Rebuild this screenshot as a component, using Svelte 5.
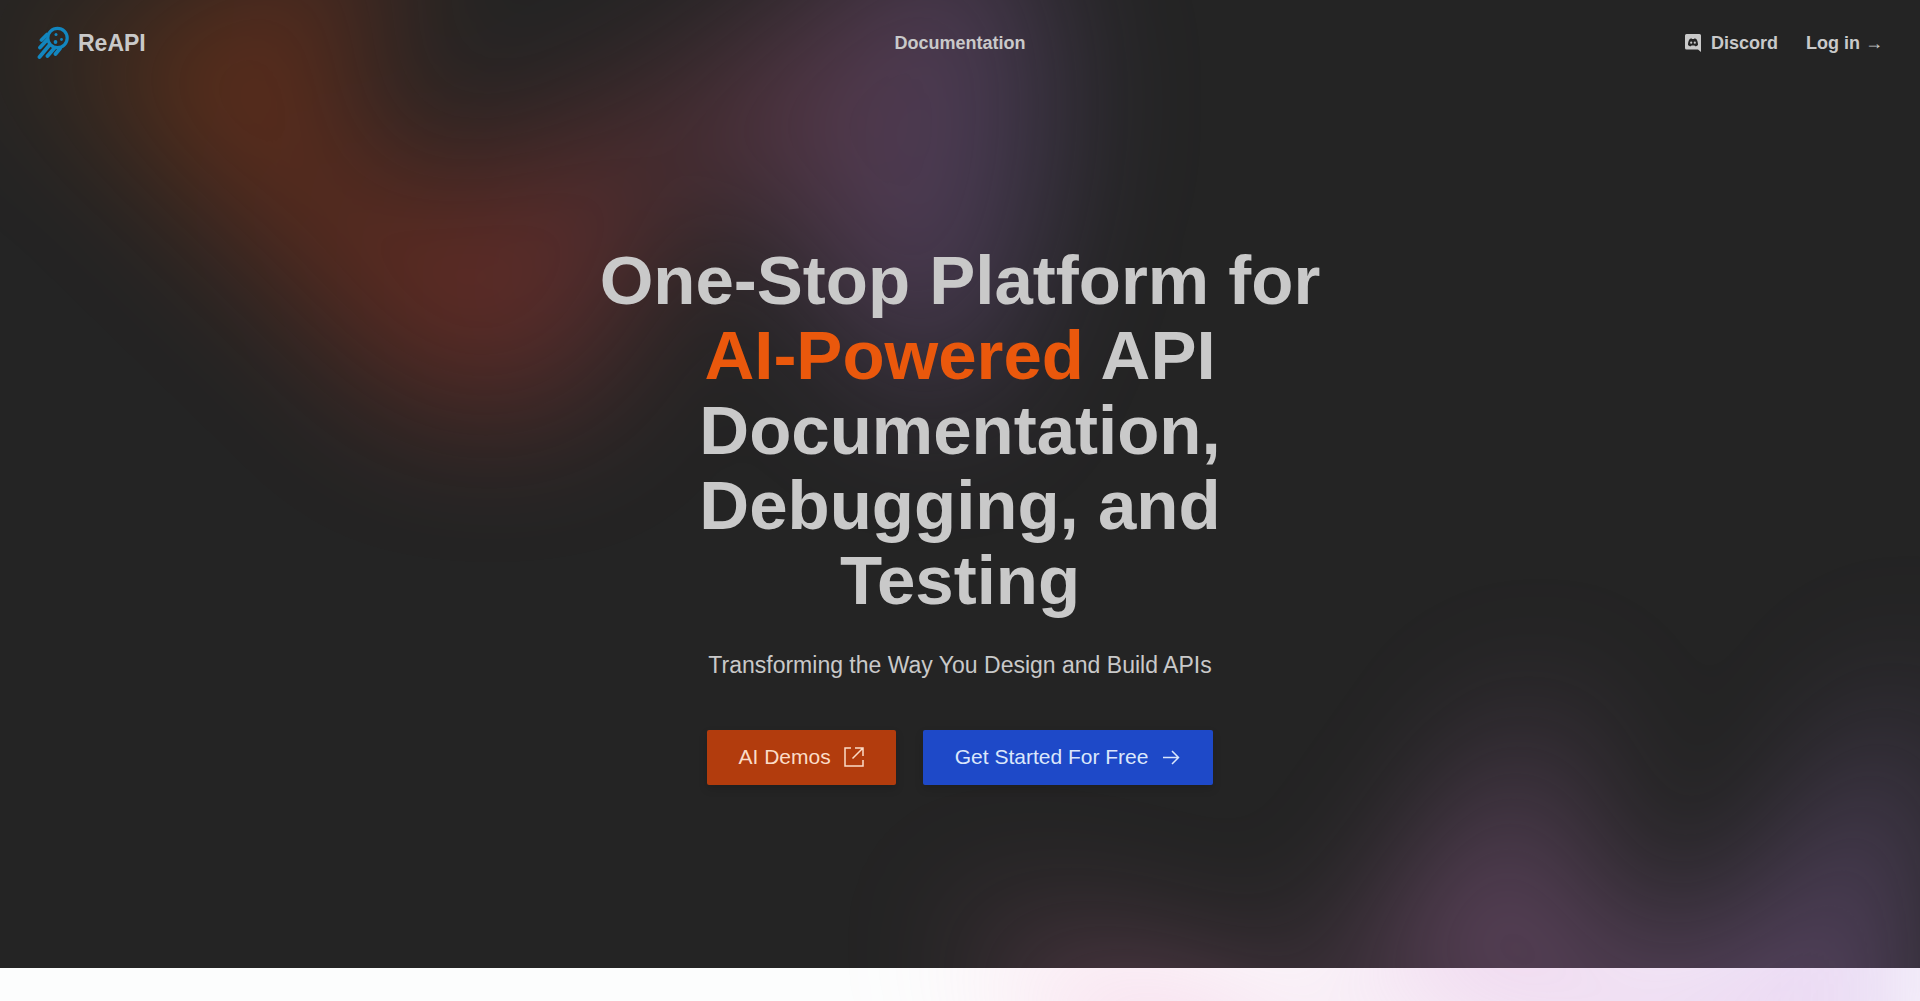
<script>
  const shape =
    'M317.219 518.975L203.852 678 0 438.341l317.219 80.634 204.172-286.402c1.307 132.337 45.083 346.658 209.733 145.248C936.936 126.058 882.053-94.234 1031.02 41.331c119.18 108.451 130.68 295.337 121.53 375.223L855 299l21.173 362.054-558.954-142.079z';
</script>

<div class="page">
  <div class="hero">
    <div class="glow glow-top">
      <svg viewBox="0 0 1155 678" aria-hidden="true">
        <path fill="url(#warm)" fill-opacity=".27" d={shape} />
        <defs>
          <linearGradient id="warm" x1="1155.49" x2="-78.208" y1=".177" y2="474.645" gradientUnits="userSpaceOnUse">
            <stop offset="0" stop-color="#9089fc" />
            <stop offset=".17" stop-color="#c078cc" />
            <stop offset=".42" stop-color="#fc3c28" />
            <stop offset=".6" stop-color="#fc4400" />
            <stop offset=".8" stop-color="#906000" />
          </linearGradient>
        </defs>
      </svg>
    </div>
    <div class="glow glow-bottom">
      <svg viewBox="0 0 1155 678" aria-hidden="true">
        <path fill="url(#cool)" fill-opacity=".3" d={shape} />
        <defs>
          <linearGradient id="cool" x1="1155.49" x2="-78.208" y1=".177" y2="474.645" gradientUnits="userSpaceOnUse">
            <stop offset="0" stop-color="#9089fc" />
            <stop offset="1" stop-color="#ff80b5" />
          </linearGradient>
        </defs>
      </svg>
    </div>

    <header>
      <div class="side">
        <a class="brand" href="#home">
          <svg viewBox="0 0 32 34" aria-hidden="true">
            <g fill="none" stroke="#1286bf" stroke-linecap="round">
              <circle cx="20.500" cy="12" r="9.700" stroke-width="3.200" />
              <path stroke-width="3.800" d="M10 8.500L4.500 14M10 14L3 21.500M12.500 19L2.500 31M17.500 22L10.500 30M23 22.500L18.500 28" />
            </g>
            <g fill="#1286bf">
              <circle cx="19" cy="8.500" r="1.500" />
              <circle cx="18.500" cy="16" r="1.900" />
              <circle cx="24.500" cy="13.500" r="1.400" />
            </g>
          </svg>
          <span>ReAPI</span>
        </a>
      </div>
      <nav><a href="#docs">Documentation</a></nav>
      <div class="side end">
        <a class="discord" href="#discord">
          <svg viewBox="0 0 16 18" aria-hidden="true">
            <path fill="currentColor" fill-rule="evenodd" d="M1.500 0h13a1.500 1.500 0 0 1 1.500 1.500V18l-3-2.500H1.500A1.500 1.500 0 0 1 0 14V1.500A1.500 1.500 0 0 1 1.500 0zM4.700 5C3.500 6.500 3 8.500 3 11c.8.900 1.700 1.300 2.900 1.300l.6-.9h3l.6.900c1.200 0 2.100-.4 2.900-1.300 0-2.500-.5-4.500-1.700-6-.8-.5-1.500-.6-2.100-.6l-.3.500H7.100l-.3-.5c-.6 0-1.300.1-2.100.6z" />
            <circle cx="6.200" cy="8.700" r="1.100" fill="currentColor" />
            <circle cx="9.800" cy="8.700" r="1.100" fill="currentColor" />
          </svg>
          Discord
        </a>
        <a href="#login">Log in <span class="arrow" aria-hidden="true">→</span></a>
      </div>
    </header>

    <main>
      <h1>One-Stop Platform for <em>AI-Powered</em> API Documentation, Debugging, and Testing</h1>
      <p>Transforming the Way You Design and Build APIs</p>
      <div class="actions">
        <a class="btn orange" href="#demos">
          AI Demos
          <svg viewBox="0 0 20 20" aria-hidden="true">
            <path d="M7 1H1v18h18v-6M11 1h8v8M19 1L8.500 11.500" />
          </svg>
        </a>
        <a class="btn blue" href="#start">
          Get Started For Free
          <svg viewBox="0 0 20 20" aria-hidden="true">
            <path d="M2 10.500h15M11 4l6.500 6.500-6.500 6.500" />
          </svg>
        </a>
      </div>
    </main>
  </div>
</div>

<style>
  :global(body) {
    margin: 0;
  }
  .page {
    min-height: 100vh;
    overflow: hidden;
    background: #fcfdfd;
    font-family: 'Liberation Sans', Arial, sans-serif;
    color: #c9c9c9;
  }
  .hero {
    position: relative;
    background: #242424;
    padding-bottom: 183px;
  }
  .glow {
    position: absolute;
    left: 0;
    right: 0;
    height: 775px;
    overflow: hidden;
    filter: blur(73px);
    pointer-events: none;
  }
  .glow svg {
    position: absolute;
    top: 0;
    width: 1320px;
    height: 775px;
  }
  .glow-top {
    top: -366px;
  }
  .glow-top svg {
    left: calc(50% - 549px);
    transform: translateX(-50%) rotate(30deg);
  }
  .glow-bottom {
    top: calc(100% - 549px);
  }
  .glow-bottom svg {
    left: calc(50% + 658px);
    transform: translateX(-50%);
  }
  header {
    position: relative;
    display: flex;
    align-items: center;
    padding: 26px 37px 24px;
    font-size: 18px;
    line-height: 32px;
    font-weight: 700;
  }
  a {
    color: inherit;
    text-decoration: none;
  }
  .side {
    flex: 1;
    display: flex;
    align-items: center;
  }
  .end {
    justify-content: flex-end;
    gap: 28px;
  }
  .brand {
    display: flex;
    align-items: center;
    gap: 9px;
    font-size: 23px;
  }
  .brand svg {
    width: 32px;
    height: 34px;
  }
  .discord {
    display: flex;
    align-items: center;
    gap: 10px;
  }
  .discord svg {
    width: 16px;
    height: 18px;
  }
  .arrow {
    font-weight: 400;
  }
  main {
    position: relative;
    max-width: 768px;
    margin: 0 auto;
    padding-top: 159px;
    text-align: center;
  }
  h1 {
    margin: 0;
    font-size: 69px;
    line-height: 75px;
    font-weight: 700;
  }
  em {
    font-style: normal;
    color: #ea580c;
  }
  p {
    margin: 29px 0 47px;
    font-size: 23px;
    line-height: 36px;
  }
  .actions {
    display: flex;
    justify-content: center;
    gap: 27px;
  }
  .btn {
    display: flex;
    align-items: center;
    gap: 13px;
    padding: 12px 32px 13px;
    border-radius: 2px;
    font-size: 21px;
    line-height: 30px;
    box-shadow: 0 4px 8px rgba(0, 0, 0, 0.15);
  }
  .btn svg {
    width: 20px;
    height: 20px;
    fill: none;
    stroke: currentColor;
    stroke-width: 1.5;
  }
  .orange {
    background: #b23c0d;
    color: #fbdcc8;
  }
  .blue {
    background: #1e49c8;
    color: #dbe7fb;
  }
</style>
